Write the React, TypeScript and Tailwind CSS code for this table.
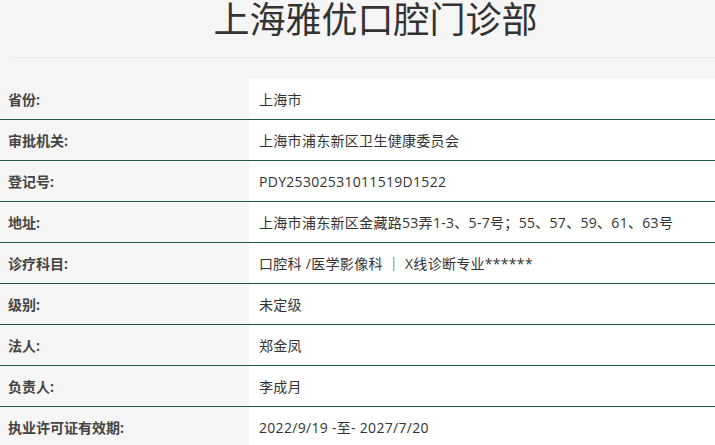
const rows: [string, string][] = [
  ['省份:', '上海市'],
  ['审批机关:', '上海市浦东新区卫生健康委员会'],
  ['登记号:', 'PDY25302531011519D1522'],
  ['地址:', '上海市浦东新区金藏路53弄1-3、5-7号；55、57、59、61、63号'],
  ['诊疗科目:', '口腔科 /医学影像科 ｜ X线诊断专业******'],
  ['级别:', '未定级'],
  ['法人:', '郑金凤'],
  ['负责人:', '李成月'],
  ['执业许可证有效期:', '2022/9/19 -至- 2027/7/20'],
];

export default function App() {
  return (
    <div
      className="min-h-screen bg-[#f5f5f5] text-[#333] overflow-hidden"
      style={{ fontFamily: '"Open Sans", "Noto Sans CJK SC", sans-serif' }}
    >
      {/* Title */}
      <div className="pl-[36px] h-[57px]">
        <h1 className="text-center text-[36px] leading-[40px] font-normal text-[#333]">
          上海雅优口腔门诊部
        </h1>
      </div>
      <div className="ml-[12px] border-t border-[#e8e8e8]" />

      {/* Info table */}
      <div className="mt-[21px]">
        {rows.map(([label, value], i) => (
          <div
            key={label}
            className={`flex h-[41px] ${i < rows.length - 1 ? 'border-b border-[#1e5a46]' : ''}`}
          >
            <div className="w-[249px] shrink-0 flex items-center pl-[8px] text-[14px] font-bold text-[#444]">
              {label}
            </div>
            <div className="flex-1 flex items-center pl-[10px] bg-white text-[14px] tracking-[0.3px] text-[#333]">
              {value}
            </div>
          </div>
        ))}
      </div>
    </div>
  );
}
